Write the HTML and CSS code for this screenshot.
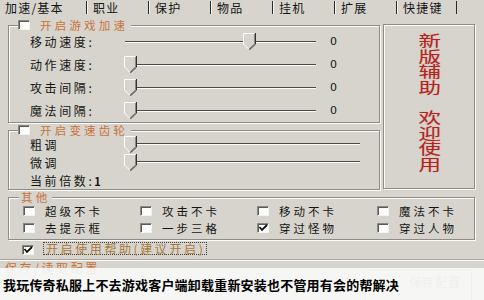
FILE: index.html
```html
<!DOCTYPE html>
<html lang="zh">
<head>
<meta charset="utf-8">
<link rel="stylesheet" href="styles.css">
</head>
<body>
<div class="screen">
  <nav class="tabs">
    <div class="tab active">加速/基本</div>
    <div class="tab">职业</div>
    <div class="tab">保护</div>
    <div class="tab">物品</div>
    <div class="tab">挂机</div>
    <div class="tab">扩展</div>
    <div class="tab last">快捷键</div>
  </nav>

  <div class="top">
    <div class="leftcol">
      <fieldset class="group g-speed">
        <legend class="lg"><span class="cb"></span><span class="lg-text">开启游戏加速</span></legend>
        <div class="srow">
          <span class="lbl">移动速度:</span>
          <div class="slider"><i class="track"></i><svg class="thumb" style="margin-left:119px" width="13" height="17" viewBox="0 0 13 17"><polygon points="0.5,0.5 11.5,0.5 11.5,11 6,16.5 0.5,11" fill="#d7d4ce"/><polyline points="6,16.5 0.5,11 0.5,0.5 11.5,0.5" stroke="#fff" fill="none"/><polyline points="11.5,1 11.5,10.8 6,16" stroke="#8a8882" fill="none"/><polyline points="12.5,0 12.5,11.2 6.2,17" stroke="#333" fill="none"/></svg></div>
          <span class="val">0</span>
        </div>
        <div class="srow">
          <span class="lbl">动作速度:</span>
          <div class="slider"><i class="track"></i><svg class="thumb" width="13" height="17" viewBox="0 0 13 17"><polygon points="0.5,0.5 11.5,0.5 11.5,11 6,16.5 0.5,11" fill="#d7d4ce"/><polyline points="6,16.5 0.5,11 0.5,0.5 11.5,0.5" stroke="#fff" fill="none"/><polyline points="11.5,1 11.5,10.8 6,16" stroke="#8a8882" fill="none"/><polyline points="12.5,0 12.5,11.2 6.2,17" stroke="#333" fill="none"/></svg></div>
          <span class="val">0</span>
        </div>
        <div class="srow">
          <span class="lbl">攻击间隔:</span>
          <div class="slider"><i class="track"></i><svg class="thumb" width="13" height="17" viewBox="0 0 13 17"><polygon points="0.5,0.5 11.5,0.5 11.5,11 6,16.5 0.5,11" fill="#d7d4ce"/><polyline points="6,16.5 0.5,11 0.5,0.5 11.5,0.5" stroke="#fff" fill="none"/><polyline points="11.5,1 11.5,10.8 6,16" stroke="#8a8882" fill="none"/><polyline points="12.5,0 12.5,11.2 6.2,17" stroke="#333" fill="none"/></svg></div>
          <span class="val">0</span>
        </div>
        <div class="srow">
          <span class="lbl">魔法间隔:</span>
          <div class="slider"><i class="track"></i><svg class="thumb" width="13" height="17" viewBox="0 0 13 17"><polygon points="0.5,0.5 11.5,0.5 11.5,11 6,16.5 0.5,11" fill="#d7d4ce"/><polyline points="6,16.5 0.5,11 0.5,0.5 11.5,0.5" stroke="#fff" fill="none"/><polyline points="11.5,1 11.5,10.8 6,16" stroke="#8a8882" fill="none"/><polyline points="12.5,0 12.5,11.2 6.2,17" stroke="#333" fill="none"/></svg></div>
          <span class="val">0</span>
        </div>
      </fieldset>

      <fieldset class="group g-gear">
        <legend class="lg"><span class="cb"></span><span class="lg-text">开启变速齿轮</span></legend>
        <div class="grow">
          <span class="lbl">粗调</span>
          <div class="slider wide"><i class="track"></i><svg class="thumb" width="13" height="17" viewBox="0 0 13 17"><polygon points="0.5,0.5 11.5,0.5 11.5,11 6,16.5 0.5,11" fill="#d7d4ce"/><polyline points="6,16.5 0.5,11 0.5,0.5 11.5,0.5" stroke="#fff" fill="none"/><polyline points="11.5,1 11.5,10.8 6,16" stroke="#8a8882" fill="none"/><polyline points="12.5,0 12.5,11.2 6.2,17" stroke="#333" fill="none"/></svg></div>
        </div>
        <div class="grow">
          <span class="lbl">微调</span>
          <div class="slider wide"><i class="track"></i><svg class="thumb" width="13" height="17" viewBox="0 0 13 17"><polygon points="0.5,0.5 11.5,0.5 11.5,11 6,16.5 0.5,11" fill="#d7d4ce"/><polyline points="6,16.5 0.5,11 0.5,0.5 11.5,0.5" stroke="#fff" fill="none"/><polyline points="11.5,1 11.5,10.8 6,16" stroke="#8a8882" fill="none"/><polyline points="12.5,0 12.5,11.2 6.2,17" stroke="#333" fill="none"/></svg></div>
        </div>
        <div class="grow">
          <span class="lbl">当前倍数:<span class="num">1</span></span>
        </div>
      </fieldset>
    </div>

    <div class="banner">
      <div class="banner-col">
        <span class="bc">新版辅助</span>
        <span class="bc gap">欢迎使用</span>
      </div>
    </div>
  </div>

  <fieldset class="group g-other">
    <legend class="lg2">其他</legend>
    <div class="opts">
      <label class="opt"><span class="cb"></span>超级不卡</label>
      <label class="opt"><span class="cb"></span>攻击不卡</label>
      <label class="opt"><span class="cb"></span>移动不卡</label>
      <label class="opt"><span class="cb"></span>魔法不卡</label>
      <label class="opt"><span class="cb"></span>去提示框</label>
      <label class="opt"><span class="cb"></span>一步三格</label>
      <label class="opt"><span class="cb checked"><svg width="10" height="8" viewBox="0 0 10 8"><polyline points="1.5,3 4,6 9,1" stroke="#111" stroke-width="1.8" fill="none"/></svg></span>穿过怪物</label>
      <label class="opt"><span class="cb"></span>穿过人物</label>
    </div>
  </fieldset>

  <div class="help"><span class="cb checked"><svg width="10" height="8" viewBox="0 0 10 8"><polyline points="1.5,3 4,6 9,1" stroke="#111" stroke-width="1.8" fill="none"/></svg></span><span class="focus">开启使用帮助(建议开启)</span></div>

  <div class="save">
    <span class="save-label">保存/读取配置</span>
    <span class="save-btn">保存配置</span>
  </div>

  <div class="caption">我玩传奇私服上不去游戏客户端卸载重新安装也不管用有会的帮解决</div>
</div>
</body>
</html>
```

FILE: styles.css
```css
* { box-sizing: border-box; }
html, body { margin: 0; padding: 0; }
body { background: #d7d4ce; }

.screen {
  width: 484px;
  height: 300px;
  position: relative;
  overflow: hidden;
  background: #d7d4ce;
  font-family: "Noto Sans CJK SC", "Noto Sans", sans-serif;
  font-size: 12px;
  color: #141414;
  letter-spacing: 2.6px;
}

/* tabs */
.tabs {
  display: flex;
  height: 17px;
  font-size: 12px;
  letter-spacing: 1.2px;
}
.tab {
  width: 62px;
  padding-left: 6px;
  border-left: 1px solid #2a2a2a;
  height: 13px;
  margin-top: 1px;
  line-height: 13px;
  box-shadow: inset 1px 0 0 #f4f4f2;
}
.tab.active {
  width: 86px;
  padding-left: 5px;
  border-left: 0;
  box-shadow: none;
}
.tab.last {
  width: 61px;
  border-right: 1px solid #2a2a2a;
}

/* group boxes */
.group {
  margin: 0;
  min-width: 0;
  border: 1px solid #8e8c86;
  box-shadow: inset 1px 1px 0 #fbfbf9, 1px 1px 0 #fbfbf9;
}
.lg {
  display: flex;
  align-items: center;
  height: 10px;
  padding: 0 3px 0 0;
  background: #d7d4ce;
}
.lg-text, .lg2 {
  color: #c8733a;
  font-size: 11.5px;
  letter-spacing: 3.2px;
  line-height: 10px;
}
.lg .cb { margin-right: 10px; }

.cb {
  display: inline-flex;
  align-items: center;
  justify-content: center;
  width: 12px;
  height: 10px;
  flex: none;
  background: #fdfdfb;
  border-top: 1px solid #8a8882;
  border-left: 1px solid #8a8882;
  border-right: 1px solid #f2f2f0;
  border-bottom: 1px solid #f2f2f0;
  box-shadow: inset 1px 1px 0 #5a5a5a;
}

.top {
  display: flex;
  padding-left: 8px;
}
.leftcol {
  width: 372px;
  display: flex;
  flex-direction: column;
}
.g-speed {
  margin-top: 3px;
  padding: 0 0 0 9px;
}
.g-gear {
  margin-top: 2px;
  padding: 0 0 0 9px;
}

.srow, .grow {
  display: flex;
  align-items: center;
  height: 23px;
  padding-left: 12px;
}
.grow { height: 18px; }
.lbl {
  width: 94px;
  flex: none;
  white-space: nowrap;
}
.num { font-size: 11px; letter-spacing: 0; font-weight: 700; }

.slider {
  display: grid;
  align-items: center;
  width: 192px;
  height: 17px;
}
.slider.wide { width: 236px; }
.slider > * { grid-area: 1 / 1; }
.track {
  display: block;
  height: 2px;
  margin-left: 1px;
  border-top: 1px solid #4a4a4a;
  border-bottom: 1px solid #fbfbf9;
}
.thumb { display: block; justify-self: start; }
.val {
  margin-left: 14px;
  font-size: 11px;
  letter-spacing: 0;
  font-family: "DejaVu Sans", sans-serif;
}

/* banner */
.banner {
  width: 92px;
  height: 165px;
  margin: 7px 0 0 3px;
  border: 1px solid #8e8c86;
  box-shadow: inset 1px 1px 0 #fbfbf9, 1px 1px 0 #fbfbf9;
  padding-top: 8px;
  display: flex;
  justify-content: center;
}
.banner-col {
  display: flex;
  flex-direction: column;
  align-items: center;
}
.bc {
  display: block;
  writing-mode: vertical-rl;
  font-size: 15px;
  line-height: 20px;
  letter-spacing: 0.5px;
  color: #b0261e;
  transform: scaleX(1.5);
  text-shadow: 0 0 1px rgba(220, 120, 110, 0.6);
}
.bc.gap { margin-top: 15px; }

/* other group */
.g-other {
  margin: 2px 9px 0 8px;
  padding: 0 0 3px 10px;
}
.lg2 {
  padding: 0 2px;
  height: 10px;
  background: #d7d4ce;
}
.opts {
  display: grid;
  grid-template-columns: 117px 117px 120px 1fr;
  grid-auto-rows: 17px;
  padding-left: 4px;
  font-size: 11.5px;
  letter-spacing: 3px;
}
.opt {
  display: flex;
  align-items: center;
  gap: 10px;
  white-space: nowrap;
}

/* help checkbox */
.help {
  display: flex;
  align-items: center;
  height: 13px;
  margin-top: 2px;
  padding-left: 22px;
}
.help .cb { margin-top: 3px; margin-right: 9px; }
.focus {
  color: #a67a3c;
  border: 1px dotted #404040;
  padding: 0 1px 0 2px;
  height: 13px;
  line-height: 11px;
  white-space: nowrap;
}

/* save area */
.save {
  display: flex;
  justify-content: space-between;
  margin-top: 4px;
  border-top: 1px solid #a8a69f;
  box-shadow: inset 0 1px 0 #fbfbf9;
  height: 50px;
}
.save-label {
  color: #c8733a;
  padding-left: 5px;
  line-height: 12px;
  margin-top: 2px;
}
.save-btn {
  width: 107px;
  height: 32px;
  margin: 10px 12px 0 0;
  padding-right: 10px;
  border: 1px solid #8e8c86;
  box-shadow: inset 1px 1px 0 #fff;
  text-align: right;
  line-height: 22px;
  letter-spacing: 1px;
  color: #888;
}

/* overlay caption */
.caption {
  position: absolute;
  left: 0;
  right: 0;
  bottom: 0;
  height: 32px;
  background: rgba(250, 250, 248, 0.9);
  display: flex;
  align-items: center;
  padding-left: 3px;
  font-size: 13px;
  font-weight: 700;
  letter-spacing: 0.2px;
  color: #000;
}
```
